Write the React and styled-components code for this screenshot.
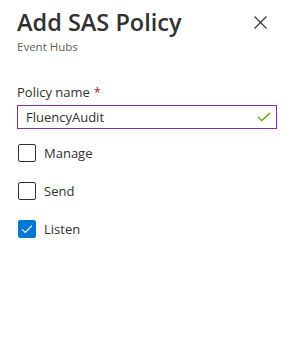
import React, { useState } from "react";
import styled, { createGlobalStyle } from "styled-components";

const GlobalStyle = createGlobalStyle`
  html, body {
    margin: 0;
    padding: 0;
    background: #ffffff;
    font-family: "Segoe UI", "Open Sans", sans-serif;
    color: #323130;
  }
`;

const Panel = styled.div`
  width: 295px;
  height: 354px;
  box-sizing: border-box;
  padding: 6px 18px 0 17px;
`;

const Header = styled.div`
  display: flex;
  justify-content: space-between;
  align-items: flex-start;
`;

const Title = styled.h1`
  margin: 0;
  font-size: 23.5px;
  font-weight: 600;
  line-height: 32px;
  color: #323130;
`;

const Subtitle = styled.div`
  font-size: 11.5px;
  line-height: 16px;
  color: #605e5c;
  margin-top: 1px;
`;

const CloseButton = styled.button`
  border: none;
  background: transparent;
  padding: 0;
  margin: 9px 10px 0 0;
  width: 14px;
  height: 14px;
  display: flex;
  align-items: center;
  justify-content: center;
  cursor: pointer;
`;

const Field = styled.div`
  margin-top: 27px;
`;

const Label = styled.label`
  display: block;
  font-size: 13px;
  line-height: 20px;
  color: #323130;
  margin-bottom: 3px;
  .req {
    color: #a4262c;
    margin-left: 4px;
  }
`;

const InputWrap = styled.div`
  display: flex;
  align-items: center;
  height: 24px;
  box-sizing: border-box;
  border: 1px solid #8a2da5;
  padding: 0 5px 0 8px;
`;

const Input = styled.input`
  flex: 1;
  border: none;
  outline: none;
  font-family: inherit;
  font-size: 13px;
  color: #323130;
  padding: 0;
  background: transparent;
`;

const Options = styled.div`
  display: flex;
  flex-direction: column;
  gap: 20px;
  margin-top: 15px;
  padding-left: 1px;
`;

const Option = styled.label`
  display: flex;
  align-items: center;
  gap: 8px;
  height: 18px;
  font-size: 13px;
  line-height: 18px;
  color: #323130;
  cursor: pointer;
`;

const Box = styled.span`
  width: 18px;
  height: 18px;
  box-sizing: border-box;
  border-radius: 2px;
  border: 1px solid ${(p) => (p.checked ? "#0078d4" : "#323130")};
  background: ${(p) => (p.checked ? "#0078d4" : "#ffffff")};
  display: flex;
  align-items: center;
  justify-content: center;
`;

function Check({ label, checked }) {
  return (
    <Option>
      <Box checked={checked}>
        {checked && (
          <svg width="12" height="10" viewBox="0 0 12 10">
            <path d="M1 5.2 L4.2 8.4 L11 1.6" fill="none" stroke="#fff" strokeWidth="1.1" />
          </svg>
        )}
      </Box>
      {label}
    </Option>
  );
}

export default function App() {
  const [name, setName] = useState("FluencyAudit");
  return (
    <Panel>
      <GlobalStyle />
      <Header>
        <div>
          <Title>Add SAS Policy</Title>
          <Subtitle>Event Hubs</Subtitle>
        </div>
        <CloseButton aria-label="Close">
          <svg width="13" height="13" viewBox="0 0 13 13">
            <path d="M0.5 0.5 L12.5 12.5 M12.5 0.5 L0.5 12.5" stroke="#323130" strokeWidth="1.1" />
          </svg>
        </CloseButton>
      </Header>
      <Field>
        <Label>
          Policy name<span className="req">*</span>
        </Label>
        <InputWrap>
          <Input value={name} onChange={(e) => setName(e.target.value)} />
          <svg width="14" height="10" viewBox="0 0 14 10">
            <path d="M1 5 L4.8 8.6 L13 1" fill="none" stroke="#57a300" strokeWidth="1.3" />
          </svg>
        </InputWrap>
      </Field>
      <Options>
        <Check label="Manage" />
        <Check label="Send" />
        <Check label="Listen" checked />
      </Options>
    </Panel>
  );
}
